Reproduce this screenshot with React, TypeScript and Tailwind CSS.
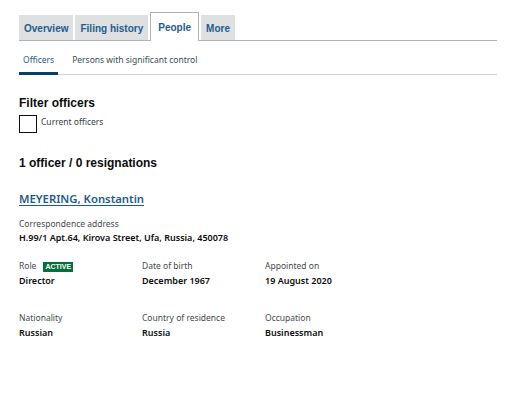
import React from 'react';

const TABS = [
  { label: 'Overview', active: false },
  { label: 'Filing history', active: false },
  { label: 'People', active: true },
  { label: 'More', active: false },
];

const ROWS = [
  [
    { label: 'Role', value: 'Director', badge: true },
    { label: 'Date of birth', value: 'December 1967' },
    { label: 'Appointed on', value: '19 August 2020' },
  ],
  [
    { label: 'Nationality', value: 'Russian' },
    { label: 'Country of residence', value: 'Russia' },
    { label: 'Occupation', value: 'Businessman' },
  ],
];

export default function App() {
  return (
    <div className="w-[512px] h-[402px] bg-white pl-[19px] pr-[15px] text-[#0b0c0c] font-['Noto_Sans',sans-serif]">
      {/* main tabs */}
      <div className="flex items-end gap-[2px] pt-[12px] border-b border-[#b1b4b6] font-['Liberation_Sans',Arial,sans-serif]">
        {TABS.map(tab => (
          <div
            key={tab.label}
            className={
              tab.active
                ? 'h-[29px] -mb-px bg-white border border-b-0 border-[#b1b4b6] px-[7px] pt-[7px] text-[10px] font-bold text-[#1d5c8f]'
                : 'h-[25px] bg-[#dee0e2] px-[5px] pt-[6px] text-[10px] font-bold text-[#1d5c8f]'
            }
          >
            {tab.label}
          </div>
        ))}
      </div>

      {/* sub tabs */}
      <div className="flex gap-[14px] border-b border-[#cfd1d3] mt-[13px] text-[8.5px]">
        <div className="px-[4px] pb-[5px] border-b-[3px] border-[#0b3d6b] -mb-px text-[#1d5c8f]">Officers</div>
        <div className="pb-[5px] text-[#3d4b57]">Persons with significant control</div>
      </div>

      {/* filter */}
      <h2 className="mt-[20px] text-[12px] font-bold leading-[16px] font-['Liberation_Sans',Arial,sans-serif]">Filter officers</h2>
      <label className="mt-[4px] flex items-center gap-[4px]">
        <span className="w-[18px] h-[18px] border-[1.5px] border-[#0b0c0c]" />
        <span className="text-[8.5px] text-[#383f43] -mt-[3px]">Current officers</span>
      </label>

      <h2 className="mt-[22px] text-[12px] font-bold leading-[16px] font-['Liberation_Sans',Arial,sans-serif]">1 officer / 0 resignations</h2>

      <a href="#" className="block mt-[20px] text-[11.3px] font-semibold leading-[16px] text-[#1d5c8f] underline underline-offset-[2px]">
        MEYERING, Konstantin
      </a>

      <div className="mt-[11px] text-[8.5px] leading-[12px] text-[#454a4d]">Correspondence address</div>
      <div className="mt-[2px] text-[9px] font-semibold leading-[12px]">H.99/1 Apt.64, Kirova Street, Ufa, Russia, 450078</div>

      <div className="mt-[17px] flex flex-col gap-[26px]">
        {ROWS.map((row, i) => (
          <div key={i} className="grid grid-cols-[123px_123px_123px]">
            {row.map(cell => (
              <div key={cell.label}>
                <div className="flex items-center gap-[7px] h-[12px] text-[8.5px] text-[#454a4d]">
                  {cell.label}
                  {cell.badge && (
                    <span className="bg-[#00703c] text-white text-[7px] font-bold px-[2px] leading-[10px] font-['Liberation_Sans',Arial,sans-serif]">ACTIVE</span>
                  )}
                </div>
                <div className="mt-[2px] text-[9px] font-semibold leading-[12px]">{cell.value}</div>
              </div>
            ))}
          </div>
        ))}
      </div>
    </div>
  );
}
